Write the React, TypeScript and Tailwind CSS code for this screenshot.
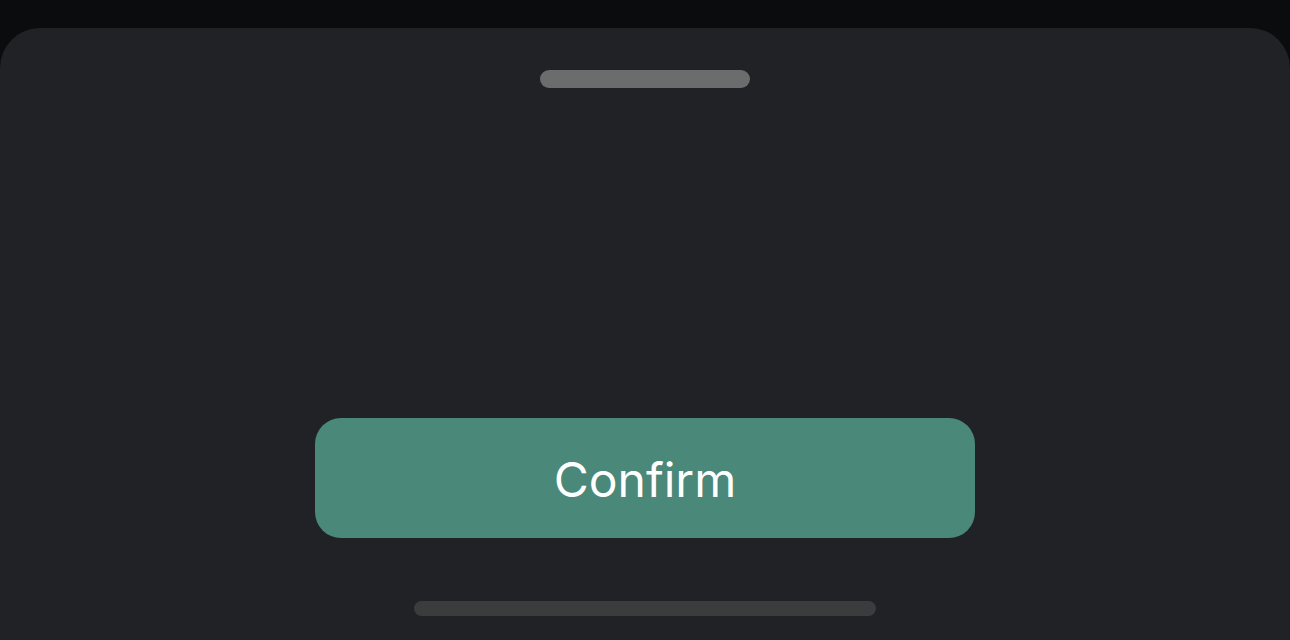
export default function App() {
  return (
    <div className="w-[1290px] h-[640px] bg-[#0b0c0e] pt-[28px] overflow-hidden" style={{ fontFamily: 'Inter, "Noto Sans", sans-serif' }}>
      <div className="h-[640px] bg-[#212226] rounded-t-[40px] flex flex-col items-center pt-[42px]">
        <div className="w-[210px] h-[18px] rounded-full bg-[#6b6c6e]" />
        <button className="mt-[330px] w-[660px] h-[120px] rounded-[26px] bg-[#4a887a] text-white text-[48px] font-normal leading-none flex items-center justify-center pt-[4px]">
          Confirm
        </button>
        <div className="mt-[63px] w-[462px] h-[15px] rounded-full bg-[#3b3c3e]" />
      </div>
    </div>
  );
}
